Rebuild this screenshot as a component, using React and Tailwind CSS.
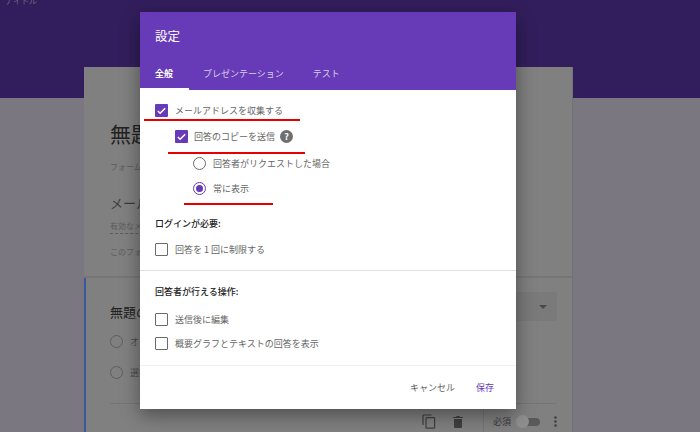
import React from 'react';

function CheckBox({ checked }) {
    if (checked) {
        return (
            <span className="flex h-[13px] w-[13px] shrink-0 items-center justify-center rounded-[1px] bg-[#673ab7]">
                <svg width="11" height="11" viewBox="0 0 24 24" fill="none" stroke="white" strokeWidth="3.4">
                    <path d="M4 13l5 5L20 7" />
                </svg>
            </span>
        );
    }
    return <span className="h-[13px] w-[13px] shrink-0 rounded-[1px] border-[1.5px] border-[#6b6b6b]" />;
}

function Radio({ checked }) {
    return (
        <span className={`flex h-[13px] w-[13px] shrink-0 items-center justify-center rounded-full border-[1.5px] ${checked ? 'border-[#673ab7]' : 'border-[#6b6b6b]'}`}>
            {checked && <span className="h-[7px] w-[7px] rounded-full bg-[#673ab7]" />}
        </span>
    );
}

function Row({ className, gap, control, children }) {
    return (
        <div className={`flex items-center ${className}`}>
            {control}
            <span className={`${gap} flex items-center text-[9px] leading-none text-[#666]`}>{children}</span>
        </div>
    );
}

function BackgroundForm() {
    return (
        <div className="h-[432px] overflow-hidden bg-[#7a7780]">
            <div className="h-[98px] bg-[#321e5c] px-[5px] text-[8px] leading-[2px] text-[#6f6a80]">ナイトル</div>
            <div className="ml-[84px] -mt-[31px] w-[489px] border-r border-[#737276] bg-[#808080]">
                <div className="h-[211px] border-b-2 border-[#767676] pl-[26px] text-[#3a3a3a]">
                    <div className="pt-[51px] text-[21px] leading-[30px] text-[#222]">無題のフォーム</div>
                    <div className="mt-[13px] text-[8px] leading-[12px] text-[#5c5c5c]">フォームの説明</div>
                    <div className="mt-[20px] text-[13px] leading-[20px]">メールアドレス</div>
                    <div className="mt-[8px] w-[200px] border-b border-dashed border-[#5c5c5c] pb-[2px] text-[8px] leading-[10px] text-[#5c5c5c]">有効なメールアドレス</div>
                    <div className="mt-[12px] text-[8px] leading-[12px] text-[#5c5c5c]">このフォームではメールアドレスが収集されます</div>
                </div>
                <div className="h-[154px] border-l-2 border-[#3a5a9f] pl-[24px] pr-[15px]">
                    <div className="flex items-start justify-between pt-[14px]">
                        <div className="pt-[10px] text-[13px] leading-[20px] text-[#222]">無題の質問</div>
                        <div className="flex h-[29px] w-[200px] items-center justify-end bg-[#7a7a7a] pr-[10px]">
                            <span className="border-x-[4px] border-t-[4px] border-x-transparent border-t-[#4a4a4a]" />
                        </div>
                    </div>
                    <div className="mt-[13px] flex items-center gap-[7px] text-[9px] leading-[13px] text-[#4c4c4c]">
                        <span className="h-[13px] w-[13px] rounded-full border-[1.5px] border-[#5e5e5e]" />オプション 1
                    </div>
                    <div className="mt-[18px] flex items-center gap-[7px] text-[9px] leading-[13px] text-[#4c4c4c]">
                        <span className="h-[13px] w-[13px] rounded-full border-[1.5px] border-[#5e5e5e]" />選択肢を追加
                    </div>
                    <div className="mt-[24px] flex h-[29px] items-center justify-end border-t border-[#757575] pt-[7px]">
                        <svg width="14" height="15" viewBox="0 0 14 15" fill="none" stroke="#3f3f3f" strokeWidth="1.2" className="mr-[17px]">
                            <path d="M9.5 1H2a1 1 0 0 0-1 1v9" />
                            <rect x="4" y="3.6" width="8.6" height="10.6" rx="0.8" />
                        </svg>
                        <svg width="10" height="12" viewBox="0 0 10 12" fill="#3f3f3f" className="mr-[20px]">
                            <path d="M1 3h8v8a1 1 0 0 1-1 1H2a1 1 0 0 1-1-1zM0 1h3l.7-1h2.6L7 1h3v1H0z" />
                        </svg>
                        <span className="h-[29px] w-px bg-[#757575]" />
                        <span className="ml-[9px] text-[9px] text-[#3a3a3a]">必須</span>
                        <span className="relative ml-[8px] h-[8px] w-[21px] rounded-full bg-[#5a5a5a]">
                            <span className="absolute -left-[3px] -top-[2.5px] h-[13px] w-[13px] rounded-full bg-[#8f8f8f]" />
                        </span>
                        <svg width="3" height="11" viewBox="0 0 3 11" fill="#3f3f3f" className="ml-[14px]">
                            <circle cx="1.5" cy="1.5" r="1.3" />
                            <circle cx="1.5" cy="5.5" r="1.3" />
                            <circle cx="1.5" cy="9.5" r="1.3" />
                        </svg>
                    </div>
                </div>
            </div>
        </div>
    );
}

export default function App() {
    return (
        <div className="relative h-[432px] w-[700px] overflow-hidden font-['Noto_Sans_CJK_JP','Noto_Sans',sans-serif]">
            <BackgroundForm />
            <div className="absolute left-[140px] top-[12px] w-[376px] bg-white shadow-[0_6px_18px_rgba(0,0,0,0.4)]">
                <div className="h-[78px] bg-[#673ab7] text-white">
                    <div className="pl-[15px] pt-[15px] text-[12.5px] leading-[18px]">設定</div>
                    <div className="mt-[13px] flex text-[9px] leading-[32px] text-[#d9cdee]">
                        <div className="h-[32px] w-[49px] border-b-2 border-white pl-[15px] font-bold text-white">全般</div>
                        <div className="ml-[14px]">プレゼンテーション</div>
                        <div className="ml-[29px]">テスト</div>
                    </div>
                </div>
                <div className="flex flex-col pl-[15px] pt-[7px]">
                    <Row className="h-[26px]" gap="ml-[7px]" control={<CheckBox checked />}>メールアドレスを収集する</Row>
                    <Row className="h-[27px] pl-[20px]" gap="ml-[6px]" control={<CheckBox checked />}>
                        回答のコピーを送信
                        <span className="ml-[5px] flex h-[13px] w-[13px] items-center justify-center rounded-full bg-[#6f6f6f] text-[9px] font-bold text-white">?</span>
                    </Row>
                    <Row className="h-[26px] pl-[38px]" gap="ml-[7px]" control={<Radio />}>回答者がリクエストした場合</Row>
                    <Row className="h-[25px] pl-[38px]" gap="ml-[7px]" control={<Radio checked />}>常に表示</Row>
                    <div className="mt-[18px] text-[9px] font-medium leading-[10px] text-[#222]">ログインが必要:</div>
                    <Row className="mt-[4px] h-[32px]" gap="ml-[7px]" control={<CheckBox />}>回答を 1 回に制限する</Row>
                </div>
                <div className="mt-[5px] border-t border-[#e0e0e0] pl-[15px]">
                    <div className="pt-[16px] text-[9px] font-medium leading-[10px] text-[#222]">回答者が行える操作:</div>
                    <Row className="mt-[10px] h-[24px]" gap="ml-[7px]" control={<CheckBox />}>送信後に編集</Row>
                    <Row className="h-[24px]" gap="ml-[7px]" control={<CheckBox />}>概要グラフとテキストの回答を表示</Row>
                </div>
                <div className="mt-[10px] flex h-[44px] items-center justify-end border-t border-[#efefef] pr-[22px] text-[9px]">
                    <span className="text-[#5f5f5f]">キャンセル</span>
                    <span className="ml-[21px] text-[#673ab7]">保存</span>
                </div>
                <span className="absolute left-[4px] top-[107px] h-[2px] w-[156px] bg-[#e60000]" />
                <span className="absolute left-[28px] top-[140px] h-[2px] w-[137px] bg-[#e60000]" />
                <span className="absolute left-[44px] top-[191px] h-[2px] w-[89px] bg-[#e60000]" />
            </div>
        </div>
    );
}
